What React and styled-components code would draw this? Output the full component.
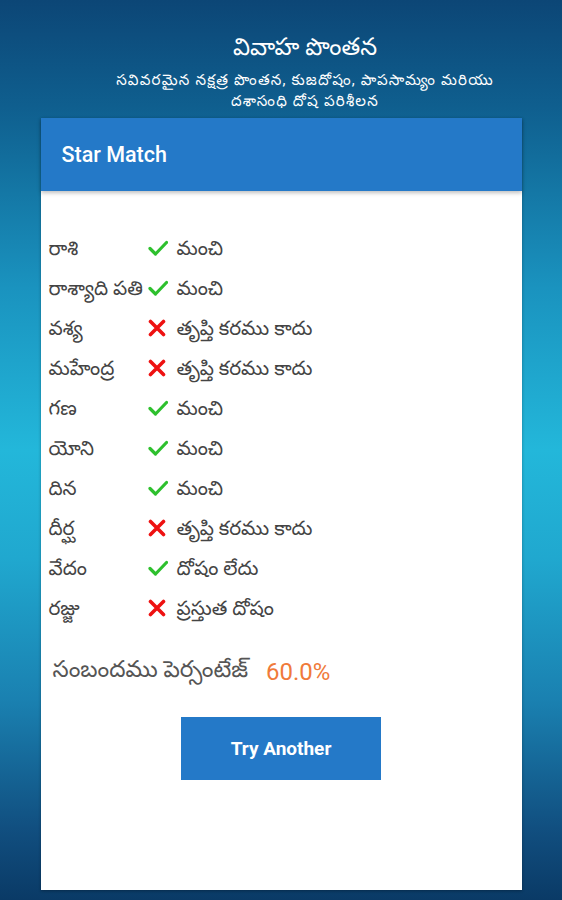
import React from "react";
import styled, { createGlobalStyle } from "styled-components";

const Global = createGlobalStyle`
  html, body { margin: 0; padding: 0; }
  body {
    width: 562px;
    height: 900px;
    overflow: hidden;
    font-family: Roboto, "Noto Sans", "Noto Sans Telugu", sans-serif;
  }
`;

const Screen = styled.div`
  width: 562px;
  height: 900px;
  box-sizing: border-box;
  display: flex;
  flex-direction: column;
  align-items: center;
  background: linear-gradient(
    180deg,
    #0c4676 0%,
    #0f5f8f 12%,
    #1a93bf 32%,
    #23b7da 50%,
    #20a8cf 62%,
    #1a80b0 78%,
    #114f80 92%,
    #0a3a66 100%
  );
`;

const Header = styled.header`
  width: 100%;
  padding-top: 30px;
  padding-left: 48px;
  box-sizing: border-box;
  display: flex;
  flex-direction: column;
  align-items: center;
  color: #ffffff;
  text-align: center;
`;

const Title = styled.h1`
  margin: 0;
  font-size: 24px;
  font-weight: 400;
  line-height: 34px;
  letter-spacing: 0;
`;

const Subtitle = styled.p`
  margin: 6px 0 0;
  font-size: 15px;
  line-height: 21px;
  letter-spacing: 1.2px;
`;

const Card = styled.section`
  margin-top: 6px;
  width: 481px;
  height: 772px;
  background: #ffffff;
  display: flex;
  flex-direction: column;
  box-shadow: 0 1px 3px rgba(0, 0, 0, 0.3);
`;

const CardBar = styled.div`
  height: 73px;
  background: #2479c8;
  display: flex;
  align-items: center;
  padding-left: 21px;
  color: #ffffff;
  font-family: Roboto, sans-serif;
  font-weight: 500;
  font-size: 21.5px;
  box-shadow: 0 2px 4px rgba(0, 0, 0, 0.25);
  position: relative;
  z-index: 1;
`;

const List = styled.div`
  padding: 39px 0 0 8px;
  display: flex;
  flex-direction: column;
`;

const Row = styled.div`
  height: 40px;
  display: flex;
  align-items: center;
  color: #444444;
  font-size: 20px;
`;

const Label = styled.span`
  width: 99px;
  white-space: nowrap;
`;

const Mark = styled.span`
  width: 29px;
  display: flex;
  align-items: center;
  margin-top: -4px;
`;

const Value = styled.span`
  white-space: nowrap;
`;

const Score = styled.div`
  margin-top: 22px;
  padding-left: 12px;
  display: flex;
  align-items: center;
  height: 40px;
  font-size: 23px;
  color: #555555;
`;

const Percent = styled.span`
  margin-left: 18px;
  color: #f07a3a;
  font-family: Roboto, sans-serif;
  font-size: 24px;
`;

const ButtonWrap = styled.div`
  margin-top: 25px;
  display: flex;
  justify-content: center;
`;

const Button = styled.button`
  width: 200px;
  height: 63px;
  border: none;
  background: #2479c8;
  color: #ffffff;
  font-family: Roboto, sans-serif;
  font-weight: 700;
  font-size: 19px;
  cursor: pointer;
`;

const Check = () => (
  <svg width="20" height="16" viewBox="0 0 20 16">
    <path d="M2 8.5 L7.5 14 L18.5 2.5" fill="none" stroke="#2ec02e" strokeWidth="3.2" strokeLinecap="round" strokeLinejoin="round" />
  </svg>
);

const Cross = () => (
  <svg width="18" height="18" viewBox="0 0 18 18">
    <path d="M2.5 2.5 L15.5 15.5 M15.5 2.5 L2.5 15.5" stroke="#ee1111" strokeWidth="3.6" strokeLinecap="round" />
  </svg>
);

const rows = [
  ["రాశి", true, "మంచి"],
  ["రాశ్యాది పతి", true, "మంచి"],
  ["వశ్య", false, "తృప్తి కరము కాదు"],
  ["మహేంద్ర", false, "తృప్తి కరము కాదు"],
  ["గణ", true, "మంచి"],
  ["యోని", true, "మంచి"],
  ["దిన", true, "మంచి"],
  ["దీర్ఘ", false, "తృప్తి కరము కాదు"],
  ["వేదం", true, "దోషం లేదు"],
  ["రజ్జు", false, "ప్రస్తుత దోషం"],
];

export default function App() {
  return (
    <>
      <Global />
      <Screen>
        <Header>
          <Title>వివాహ పొంతన</Title>
          <Subtitle>
            సవివరమైన నక్షత్ర పొంతన, కుజదోషం, పాపసామ్యం మరియు
            <br />
            దశాసంధి దోష పరిశీలన
          </Subtitle>
        </Header>
        <Card>
          <CardBar>Star Match</CardBar>
          <List>
            {rows.map(([label, ok, value]) => (
              <Row key={label}>
                <Label>{label}</Label>
                <Mark>{ok ? <Check /> : <Cross />}</Mark>
                <Value>{value}</Value>
              </Row>
            ))}
          </List>
          <Score>
            సంబందము పెర్సంటేజ్
            <Percent>60.0%</Percent>
          </Score>
          <ButtonWrap>
            <Button>Try Another</Button>
          </ButtonWrap>
        </Card>
      </Screen>
    </>
  );
}
